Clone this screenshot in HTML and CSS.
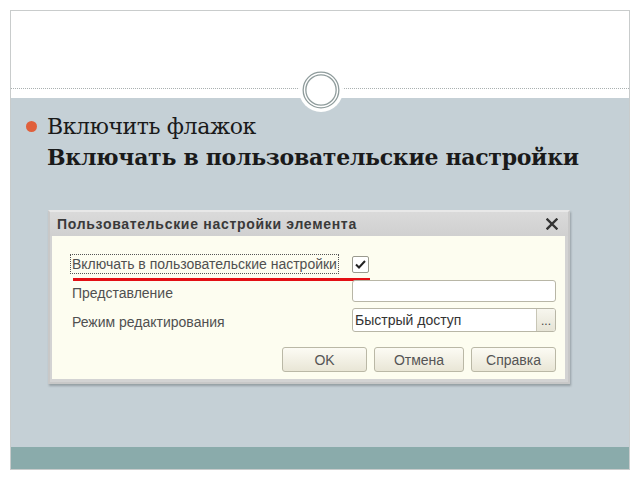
FILE: index.html
```html
<!DOCTYPE html>
<html lang="ru">
<head>
<meta charset="utf-8">
<link rel="stylesheet" href="styles.css">
</head>
<body>
<div class="slide">
  <div class="header">
    <div class="rule rule-left"></div>
    <div class="rule rule-right"></div>
    <svg class="ornament" width="48" height="48" viewBox="0 0 48 48">
      <circle cx="24" cy="24" r="22" fill="#fff"/>
      <circle cx="24" cy="24" r="16.5" fill="none" stroke="#8f9c9c" stroke-width="4"/>
      <circle cx="24" cy="24" r="16.5" fill="none" stroke="#fff" stroke-width="1.4"/>
    </svg>
  </div>
  <div class="content">
    <div class="bullet">
      <span class="dot"></span>
      <div class="bullet-text">
        <div class="line1">Включить флажок</div>
        <div class="line2">Включать в пользовательские настройки</div>
      </div>
    </div>
    <div class="dialog">
      <div class="titlebar">
        <span class="title">Пользовательские настройки элемента</span>
        <svg class="close" width="12" height="12" viewBox="0 0 12 12">
          <path d="M1.5 1.5 L10.5 10.5 M10.5 1.5 L1.5 10.5" stroke="#333" stroke-width="2.4" stroke-linecap="square"/>
        </svg>
      </div>
      <div class="body">
        <div class="form">
          <div class="row row-check">
            <span class="label focus">Включать в пользовательские настройки</span>
            <span class="checkbox">
              <svg width="11" height="9" viewBox="0 0 11 9"><path d="M1 4.5 L4 7.5 L10 1" fill="none" stroke="#222" stroke-width="2"/></svg>
            </span>
          </div>
          <div class="redline"></div>
          <div class="row row-input">
            <span class="label low">Представление</span>
            <span class="input"></span>
          </div>
          <div class="row row-select">
            <span class="label low">Режим редактирования</span>
            <span class="input select"><span class="value">Быстрый доступ</span><span class="more">...</span></span>
          </div>
        </div>
        <div class="buttons">
          <span class="btn btn-ok">OK</span>
          <span class="btn btn-cancel">Отмена</span>
          <span class="btn btn-help">Справка</span>
        </div>
      </div>
    </div>
  </div>
  <div class="footer"></div>
</div>
</body>
</html>
```

FILE: styles.css
```css
html, body {
  margin: 0;
  padding: 0;
  background: #ffffff;
}
.slide {
  margin: 10px 0 0 10px;
  width: 618px;
  height: 458px;
  border: 1px solid #c9cccc;
  display: flex;
  flex-direction: column;
}
.header {
  height: 87px;
  background: #ffffff;
  position: relative;
  z-index: 2;
}
.rule {
  position: absolute;
  top: 77px;
  height: 0;
  border-top: 1px dotted #a9b0b0;
}
.rule-left { left: 0; width: 291px; }
.rule-right { left: 327px; right: 0; }
.ornament {
  position: absolute;
  left: 286px;
  top: 55px;
}
.content {
  flex: 1;
  background: #c5d0d6;
  padding: 13px 0 0 15px;
  display: flex;
  flex-direction: column;
}
.bullet {
  display: flex;
  align-items: flex-start;
}
.dot {
  width: 11px;
  height: 11px;
  border-radius: 50%;
  background: #e0603c;
  margin: 10px 10px 0 0;
  flex: none;
}
.bullet-text {
  font-family: "DejaVu Serif", "Liberation Serif", serif;
  color: #1a1a1a;
  font-size: 22px;
  line-height: 31px;
}
.line1 {
  font-weight: normal;
  letter-spacing: -0.4px;
}
.line2 {
  font-weight: bold;
  letter-spacing: -0.3px;
}
.dialog {
  margin: 37px 0 0 22px;
  width: 518px;
  height: 170px;
  background: #d3d3d3;
  border: 2px solid #c8c8c8;
  border-top-color: #e8e8e8;
  box-shadow: 1px 2px 2px rgba(90, 100, 105, 0.45);
  display: flex;
  flex-direction: column;
  font-family: "Liberation Sans", Arial, sans-serif;
}
.titlebar {
  height: 24px;
  display: flex;
  align-items: center;
  justify-content: space-between;
  padding: 0 10px 0 7px;
  background: linear-gradient(#dadada, #d0d0d0);
}
.title {
  font-size: 14px;
  font-weight: bold;
  color: #3a3a3a;
  letter-spacing: 0.7px;
}
.body {
  flex: 1;
  margin: 0 3px 3px 2px;
  background: #fdfdf0;
  padding: 18px 9px 0 18px;
  display: flex;
  flex-direction: column;
}
.form {
  display: flex;
  flex-direction: column;
}
.row {
  display: flex;
  align-items: center;
  justify-content: space-between;
  font-size: 14px;
  color: #505050;
}
.label {
  padding: 1px 1px;
  border: 1px solid transparent;
}
.label.low {
  padding-top: 5px;
}
.label.focus {
  border: 1px dotted #555;
}
.row-check {
  height: 20px;
  justify-content: flex-start;
}
.checkbox {
  margin-left: 13px;
  width: 15px;
  height: 15px;
  border: 1px solid #9a9a8e;
  border-radius: 2px;
  background: #ffffff;
  display: flex;
  align-items: center;
  justify-content: center;
}
.redline {
  margin: 4px 0 0 3px;
  width: 297px;
  height: 3px;
  background: #e30f14;
}
.row-input {
  margin-top: -1px;
  height: 22px;
}
.input {
  width: 202px;
  height: 20px;
  border: 1px solid #b8b6a6;
  border-radius: 3px;
  background: #ffffff;
  box-sizing: content-box;
}
.row-select {
  margin-top: 6px;
  height: 24px;
}
.select {
  height: 22px;
  display: flex;
  align-items: center;
  overflow: hidden;
}
.value {
  flex: 1;
  padding-left: 2px;
  color: #333;
}
.more {
  width: 18px;
  height: 22px;
  border-left: 1px solid #c8c6b6;
  background: linear-gradient(#f7f6ee, #e6e4d6);
  font-size: 12px;
  line-height: 24px;
  text-align: center;
  color: #444;
}
.buttons {
  margin-top: 15px;
  display: flex;
  justify-content: flex-end;
  gap: 7px;
}
.btn {
  height: 23px;
  border: 1px solid #bab8a6;
  border-radius: 3px;
  background: linear-gradient(#fcfbf4, #e9e6d6);
  color: #555;
  font-size: 14px;
  display: flex;
  align-items: center;
  justify-content: center;
}
.btn-ok { width: 83px; }
.btn-cancel { width: 88px; }
.btn-help { width: 83px; }
.footer {
  height: 22px;
  background: #8aabab;
}
```
